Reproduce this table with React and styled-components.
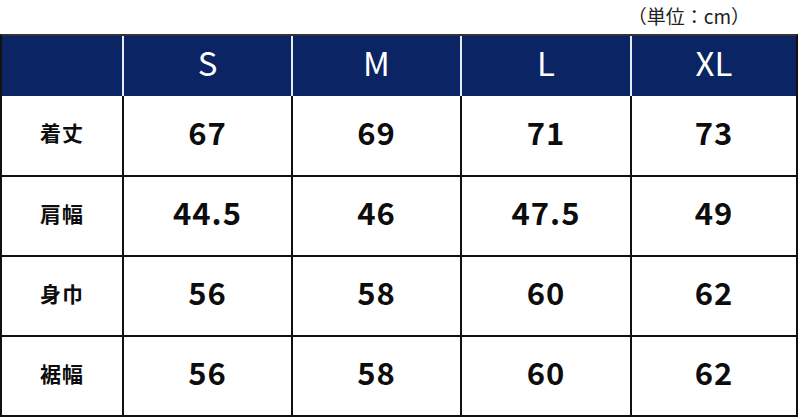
import React from 'react';
import styled, { createGlobalStyle } from 'styled-components';

const GlobalStyle = createGlobalStyle`
  html, body {
    margin: 0;
    padding: 0;
    background: #fff;
  }
  body {
    font-family: "Noto Sans CJK JP", "Noto Sans", sans-serif;
    color: #111;
  }
`;

const Page = styled.div`
  width: 800px;
  height: 418px;
  overflow: hidden;
`;

const Unit = styled.div`
  height: 34px;
  display: flex;
  align-items: center;
  justify-content: flex-end;
  padding-right: 50px;
  padding-bottom: 4px;
  font-size: 19px;
  line-height: 1;
  color: #222;
  box-sizing: border-box;
`;

const Table = styled.div`
  width: 798px;
  border: 2px solid #111;
  border-top-color: #333;
  box-sizing: border-box;
  display: grid;
  grid-template-columns: 120px 169px 169px 170px 1fr;
  grid-template-rows: 60px 79px 80px 80px 80px;
`;

const HeadCell = styled.div`
  background: #0b2463;
  color: #fff;
  font-size: 33px;
  font-weight: 400;
  line-height: 1;
  padding-bottom: 8px;
  display: flex;
  align-items: center;
  justify-content: center;
  border-left: ${(p) => (p.$first ? 'none' : '2px solid #e6ecf7')};
`;

const Cell = styled.div`
  display: flex;
  align-items: center;
  justify-content: center;
  line-height: 1;
  padding-bottom: ${(p) => (p.$label ? '6px' : '9px')};
  border-left: ${(p) => (p.$first ? 'none' : '2px solid #111')};
  border-top: ${(p) => (p.$topLine ? '2px solid #111' : 'none')};
  font-weight: 700;
  font-size: ${(p) => (p.$label ? '21px' : '31px')};
  letter-spacing: 1px;
  color: #0d0d0d;
`;

const sizes = ['S', 'M', 'L', 'XL'];
const rows = [
  ['着丈', '67', '69', '71', '73'],
  ['肩幅', '44.5', '46', '47.5', '49'],
  ['身巾', '56', '58', '60', '62'],
  ['裾幅', '56', '58', '60', '62'],
];

export default function App() {
  return (
    <Page>
      <GlobalStyle />
      <Unit>（単位：cm）</Unit>
      <Table>
        <HeadCell $first />
        {sizes.map((s) => (
          <HeadCell key={s}>{s}</HeadCell>
        ))}
        {rows.map((r, i) =>
          r.map((v, j) => (
            <Cell key={`${i}-${j}`} $first={j === 0} $label={j === 0} $topLine={i > 0}>
              {v}
            </Cell>
          ))
        )}
      </Table>
    </Page>
  );
}
